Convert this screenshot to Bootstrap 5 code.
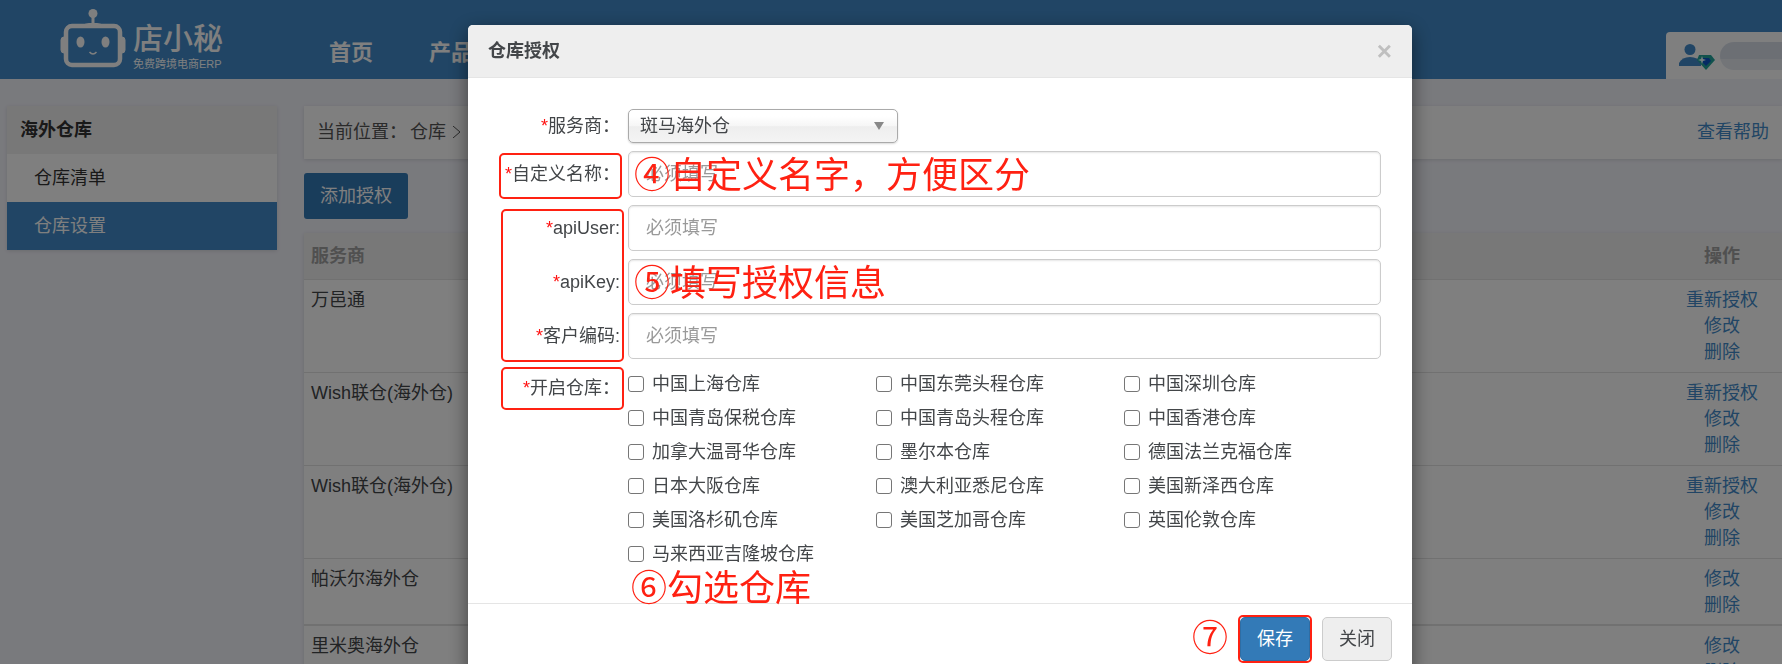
<!DOCTYPE html>
<html lang="zh-CN">
<head>
<meta charset="utf-8">
<meta name="viewport" content="width=device-width, initial-scale=1">
<title>仓库授权</title>
<link rel="stylesheet" href="https://cdn.jsdelivr.net/npm/bootstrap@5.3.0/dist/css/bootstrap.min.css">
<style>
  body { font: 18px/26px "Liberation Sans", "Noto Sans CJK SC", sans-serif; color: #434649; background: #f3f4fb; }
  a { color: #428bca; text-decoration: none; }

  /* top bar */
  .topbar { background: #428bca; height: 79px; padding-left: 60px; }
  .brand { color: #fff; gap: 7px; padding-top: 9px; }
  .brand svg { width: 66px; height: 60px; }
  .brand-name { font-size: 30px; line-height: 36px; font-weight: 500; }
  .brand-sub { font-size: 11px; line-height: 14px; }
  .mainnav { gap: 56px; margin-left: 106px; padding-top: 18px; }
  .mainnav a { color: #fff; font-size: 22px; font-weight: 700; }
  .userbox { background: #fff; width: 116px; height: 47px; border-top-left-radius: 4px; padding-left: 12px; gap: 5px; }
  .userbox .masked { height: 28px; background: linear-gradient(#d9dfe9 60%, #e6eaf1 60%); border-radius: 14px 0 0 14px; }

  /* page */
  .page { padding: 27px 0 0 7px; gap: 27px; }
  .side { width: 270px; background: #fff; box-shadow: 0 1px 4px rgba(0,0,0,.12); }
  .side-title { background: #f0f0f0; color: #333; font-weight: 700; padding: 11px 13px; }
  .side a { color: #333; padding: 11px 27px; }
  .side a.active { background: #428bca; color: #fff; }
  .main { gap: 14px; min-width: 0; }
  .crumbs { background: #fff; padding: 13px 13px 14px 13px; box-shadow: 0 1px 4px rgba(0,0,0,.12); }
  .crumbs span { color: #555; }
  .crumb-path { gap: 3px; }
  .crumb-path svg { width: 16px; height: 12px; }
  .btn-add { background: #337ab7; color: #fff; font-size: 18px; line-height: 26px; padding: 10px 16px; border: 0; border-radius: 3px; }
  .grid-table { background: #fff; box-shadow: 0 1px 4px rgba(0,0,0,.12); }
  .grid-table th { background: #f0f0f0; color: #a0a0a0; padding: 10px 7px; border-bottom: 1px solid #e2e2e2; }
  .grid-table td { color: #434649; padding: 7px; border-bottom: 1px solid #e2e2e2; vertical-align: top; }
  .grid-table .ops { width: 120px; text-align: center; }
  .grid-table .ops a { display: block; }
  .grid-table .heavy td { padding-bottom: 6px; border-bottom-width: 2px; }

  /* dialog */
  .auth-dialog { max-width: 944px; margin: 25px 0 25px calc(50% - 423px); }
  .auth-dialog .modal-content { border: 0; border-radius: 5px; box-shadow: 0 6px 19px rgba(0,0,0,.5); color: #434649; }
  .auth-dialog .modal-header { background: #eee; border-bottom: 1px solid #e5e5e5; border-radius: 5px 5px 0 0; padding: 13px 20px; }
  .auth-dialog .modal-title { font-size: 18px; line-height: 26px; font-weight: 700; }
  .x-close { border: 0; background: none; padding: 0; color: #bfbfbf; font-size: 26px; line-height: 26px; font-weight: 700; }
  .auth-dialog .modal-body { padding: 31px 31px 32px; }
  .auth-form { gap: 8px; }
  .field { gap: 8px; }
  .field-label { flex: 0 0 121px; text-align: right; white-space: nowrap; }
  .req { color: #ff1111; }
  .auth-form .form-control { height: 46px; font-size: 18px; padding: 0 17px; border: 1px solid #ccc; border-radius: 5px; box-shadow: inset 0 1px 2px rgba(0,0,0,.1); }
  .auth-form .form-control::placeholder { color: #999; }
  .auth-form .form-select { width: 270px; height: 34px; font-size: 18px; line-height: 26px; color: #434649; padding: 0 30px 0 11px; border: 1px solid #aaa; border-radius: 5px; box-shadow: 0 1px 2px rgba(0,0,0,.15);
    background: url("data:image/svg+xml,%3Csvg xmlns='http://www.w3.org/2000/svg' viewBox='0 0 10 8'%3E%3Cpath d='M0 0h10L5 8z' fill='%23888'/%3E%3C/svg%3E") right 13px center / 10px 8px no-repeat, linear-gradient(#fff 20%, #f6f6f6 50%, #eee 52%, #f4f4f4 100%); }
  .wh-grid { flex: 0 0 744px; display: grid; grid-template-columns: repeat(3, 1fr); }
  .wh-grid label { display: flex; align-items: center; gap: 8px; height: 34px; white-space: nowrap; }
  .wh-grid .form-check-input { width: 16px; height: 16px; margin: 0; border: 1px solid #767676; border-radius: 3px; }
  .auth-dialog .modal-footer { padding: 13px 20px; gap: 12px; border-top: 1px solid #e5e5e5; }
  .auth-dialog .modal-footer > * { margin: 0; }
  .btn-dlg { font-size: 18px; line-height: 26px; padding: 8px 16px; border-radius: 5px; }
  .btn-save { background: #337ab7; color: #fff; border: 1px solid #2e6da4; }
  .btn-shut { background: #eee; color: #434649; border: 1px solid #ccc; }

  /* tutorial marks laid over the dialog */
  .frame { position: absolute; border: 2px solid #ff2112; border-radius: 5px; pointer-events: none; }
  .frame-label { left: 0; width: 123px; top: 2px; height: 46px; }
  .frame-group { left: 2px; width: 123px; top: 4px; height: 153px; }
  .frame-open { left: 2px; width: 123px; top: 0; height: 43px; }
  .frame-save { inset: -2px; }
  .note { color: #ff2112; font-size: 36px; line-height: 44px; white-space: nowrap; pointer-events: none; }
  .note-over { position: absolute; left: 135px; top: 3px; }
  .note-pick { position: absolute; left: 132px; bottom: -40px; }
</style>
</head>
<body class="vh-100 overflow-hidden">
<header class="topbar d-flex align-items-start">
  <a class="brand d-flex" href="#">
    <svg viewBox="0 0 66 60" fill="none" stroke="#fff" aria-hidden="true">
      <circle cx="33" cy="4.500" r="4.500" fill="#fff" stroke="none"/>
      <path d="M33 8v9" stroke-width="3"/>
      <path d="M22 17q3-3 7-3h8q4 0 7 3z" fill="#fff" stroke="none"/>
      <rect x="6" y="17" width="54" height="39" rx="6" stroke-width="4.500"/>
      <path d="M5 28H4q-3 0-3 3v10q0 3 3 3h1zM61 28h1q3 0 3 3v10q0 3-3 3h-1z" fill="#fff" stroke="#fff"/>
      <ellipse cx="20.500" cy="33" rx="4" ry="5.500" fill="#fff" stroke="none"/>
      <ellipse cx="45.500" cy="33" rx="4" ry="5.500" fill="#fff" stroke="none"/>
      <path d="M29.500 43q3.500 4 7 0" stroke-width="1.500"/>
    </svg>
    <span class="d-flex flex-column pt-2 mt-1">
      <span class="brand-name">店小秘</span>
      <span class="brand-sub">免费跨境电商ERP</span>
    </span>
  </a>
  <nav class="mainnav d-flex align-self-center mt-2"><a href="#">首页</a><a href="#">产品</a></nav>
  <div class="userbox d-flex align-items-center ms-auto align-self-end">
    <svg width="37" height="28" viewBox="0 0 37 28" aria-hidden="true">
      <circle cx="12" cy="7.500" r="5.500" fill="#428bca"/>
      <path d="M1 24v-3q3-6 11-6t11 6v3z" fill="#428bca"/>
      <path d="M21 13h12l4 5-9 10-9-10z" fill="#22a59b"/>
      <path d="M24 16h7l2 3-5 5-5-5z" fill="#0a55c8"/>
      <path d="M24 14l1 3 3 1-3 1-1 3-1-3-3-1 3-1z" fill="#e8ffff"/>
    </svg>
    <span class="masked flex-grow-1"></span>
  </div>
</header>

<div class="page d-flex align-items-start">
  <aside class="side flex-shrink-0">
    <div class="side-title">海外仓库</div>
    <nav class="d-flex flex-column"><a href="#">仓库清单</a><a class="active" href="#">仓库设置</a></nav>
  </aside>
  <main class="main flex-grow-1 d-flex flex-column align-items-stretch">
    <div class="crumbs d-flex justify-content-between">
      <div class="crumb-path d-flex align-items-center">
        <span>当前位置：</span><span>仓库</span>
        <svg viewBox="0 0 16 12" fill="none" stroke="#555" aria-hidden="true"><path d="M4 0l7 6-7 6"/></svg>
        <span>海外仓库</span>
      </div>
      <a href="#">查看帮助</a>
    </div>
    <div class="d-flex"><button class="btn btn-add" type="button">添加授权</button></div>
    <table class="grid-table w-100">
      <thead><tr><th>服务商</th><th class="ops">操作</th></tr></thead>
      <tbody>
        <tr><td>万邑通</td><td class="ops"><a href="#">重新授权</a><a href="#">修改</a><a href="#">删除</a></td></tr>
        <tr><td>Wish联仓(海外仓)</td><td class="ops"><a href="#">重新授权</a><a href="#">修改</a><a href="#">删除</a></td></tr>
        <tr><td>Wish联仓(海外仓)</td><td class="ops"><a href="#">重新授权</a><a href="#">修改</a><a href="#">删除</a></td></tr>
        <tr class="heavy"><td>帕沃尔海外仓</td><td class="ops"><a href="#">修改</a><a href="#">删除</a></td></tr>
        <tr><td>里米奥海外仓</td><td class="ops"><a href="#">修改</a><a href="#">删除</a></td></tr>
      </tbody>
    </table>
  </main>
</div>

<div class="modal-backdrop show"></div>
<div class="modal d-block overflow-hidden" role="dialog" aria-modal="true" aria-labelledby="dlgTitle">
  <div class="modal-dialog auth-dialog">
    <div class="modal-content">
      <div class="modal-header">
        <h1 class="modal-title" id="dlgTitle">仓库授权</h1>
        <button class="x-close" type="button" aria-label="关闭">×</button>
      </div>
      <div class="modal-body">
        <form class="auth-form d-flex flex-column">
          <div class="field d-flex align-items-center">
            <label class="field-label" for="provider"><span class="req">*</span>服务商：</label>
            <select class="form-select" id="provider"><option>斑马海外仓</option></select>
          </div>
          <div class="field d-flex align-items-center position-relative">
            <label class="field-label" for="alias"><span class="req">*</span>自定义名称：</label>
            <input class="form-control" id="alias" type="text" placeholder="必须填写">
            <span class="frame frame-label"></span>
            <span class="note note-over">④自定义名字，方便区分</span>
          </div>
          <div class="auth-form d-flex flex-column position-relative">
            <div class="field d-flex align-items-center">
              <label class="field-label" for="apiUser"><span class="req">*</span>apiUser:</label>
              <input class="form-control" id="apiUser" type="text" placeholder="必须填写">
            </div>
            <div class="field d-flex align-items-center position-relative">
              <label class="field-label" for="apiKey"><span class="req">*</span>apiKey:</label>
              <input class="form-control" id="apiKey" type="text" placeholder="必须填写">
              <span class="note note-over">⑤填写授权信息</span>
            </div>
            <div class="field d-flex align-items-center">
              <label class="field-label" for="code"><span class="req">*</span>客户编码:</label>
              <input class="form-control" id="code" type="text" placeholder="必须填写">
            </div>
            <span class="frame frame-group"></span>
          </div>
          <div class="field d-flex align-items-start position-relative" role="group" aria-labelledby="whLabel">
            <span class="field-label pt-2" id="whLabel"><span class="req">*</span>开启仓库：</span>
            <div class="wh-grid">
              <label><input class="form-check-input" type="checkbox">中国上海仓库</label>
              <label><input class="form-check-input" type="checkbox">中国东莞头程仓库</label>
              <label><input class="form-check-input" type="checkbox">中国深圳仓库</label>
              <label><input class="form-check-input" type="checkbox">中国青岛保税仓库</label>
              <label><input class="form-check-input" type="checkbox">中国青岛头程仓库</label>
              <label><input class="form-check-input" type="checkbox">中国香港仓库</label>
              <label><input class="form-check-input" type="checkbox">加拿大温哥华仓库</label>
              <label><input class="form-check-input" type="checkbox">墨尔本仓库</label>
              <label><input class="form-check-input" type="checkbox">德国法兰克福仓库</label>
              <label><input class="form-check-input" type="checkbox">日本大阪仓库</label>
              <label><input class="form-check-input" type="checkbox">澳大利亚悉尼仓库</label>
              <label><input class="form-check-input" type="checkbox">美国新泽西仓库</label>
              <label><input class="form-check-input" type="checkbox">美国洛杉矶仓库</label>
              <label><input class="form-check-input" type="checkbox">美国芝加哥仓库</label>
              <label><input class="form-check-input" type="checkbox">英国伦敦仓库</label>
              <label><input class="form-check-input" type="checkbox">马来西亚吉隆坡仓库</label>
            </div>
            <span class="frame frame-open"></span>
            <span class="note note-pick">⑥勾选仓库</span>
          </div>
        </form>
      </div>
      <div class="modal-footer">
        <span class="note">⑦</span>
        <div class="position-relative"><button class="btn btn-dlg btn-save" type="submit">保存</button><span class="frame frame-save"></span></div>
        <button class="btn btn-dlg btn-shut" type="button">关闭</button>
      </div>
    </div>
  </div>
</div>
<script src="https://cdn.jsdelivr.net/npm/bootstrap@5.3.0/dist/js/bootstrap.bundle.min.js"></script>
</body>
</html>
